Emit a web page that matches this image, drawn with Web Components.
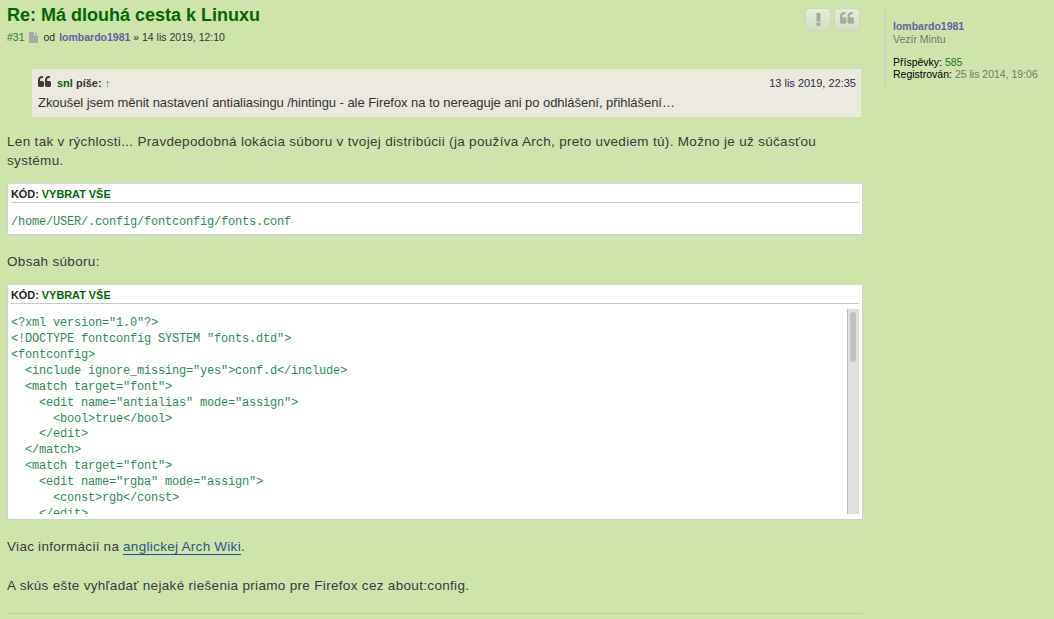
<!DOCTYPE html>
<html lang="sk"><head><meta charset="utf-8"><title>Re: Má dlouhá cesta k Linuxu</title>
<style>
html,body{margin:0;padding:0;height:619px;overflow:hidden;background:#cfe4ab}
body{font-family:"Liberation Sans",Arial,sans-serif;color:#333}
</style></head><body>
<forum-post>
  <post-head slot="head"></post-head>
  <quote-box slot="body" author="snl" date="13 lis 2019, 22:35">Zkoušel jsem měnit nastavení antialiasingu /hintingu - ale Firefox na to nereaguje ani po odhlášení, přihlášení…</quote-box>
  <post-text slot="body" class="t1">Len tak v rýchlosti... Pravdepodobná lokácia súboru v tvojej distribúcii (ja používa Arch, preto uvediem tú). Možno je už súčasťou systému.</post-text>
  <code-box slot="body" class="one"></code-box>
  <post-text slot="body" class="t2">Obsah súboru:</post-text>
  <code-box slot="body" class="two" scroll></code-box>
  <post-text slot="body" class="t3">Viac informácií na <a href="#">anglickej Arch Wiki</a>.</post-text>
  <post-text slot="body" class="t4">A skús ešte vyhľadať nejaké riešenia priamo pre Firefox cez about:config.</post-text>
  <post-profile slot="side"></post-profile>
</forum-post>
<script>
const QUOTE='M768 832v384q0 80-56 136t-136 56h-384q-80 0-136-56t-56-136v-704q0-104 40.500-198.500t109.500-163.500 163.500-109.500 198.500-40.500h64q26 0 45 19t19 45v128q0 26-19 45t-45 19h-64q-106 0-181 75t-75 181v32q0 40 28 68t68 28h224q80 0 136 56t56 136zm896 0v384q0 80-56 136t-136 56h-384q-80 0-136-56t-56-136v-704q0-104 40.500-198.500t109.500-163.500 163.500-109.500 198.500-40.500h64q26 0 45 19t19 45v128q0 26-19 45t-45 19h-64q-106 0-181 75t-75 181v32q0 40 28 68t68 28h224q80 0 136 56t56 136z';
function def(name,html,setup){customElements.define(name,class extends HTMLElement{constructor(){super();this.attachShadow({mode:'open'}).innerHTML=html;if(setup)setup(this)}})}
def('forum-post',`<style>
:host{display:grid;grid-template-columns:856px 1fr;column-gap:21px;padding:6px 0 0 7px;box-sizing:border-box;height:619px;overflow:hidden}
.main{display:flex;flex-direction:column;border-bottom:1px solid #b8cfa0;height:608px;box-sizing:border-box}
.body{display:flex;flex-direction:column}
</style>
<div class="main"><slot name="head"></slot><div class="body"><slot name="body"></slot></div></div>
<slot name="side"></slot>`);
def('post-head',`<style>
:host{display:block;position:relative;height:63px}
h3{margin:0;font:bold 18px/18px "Liberation Sans",sans-serif;color:#006600}
.meta{display:flex;align-items:center;font-size:10.500px;line-height:14px;margin-top:6px;color:#333}
.meta svg{margin:0 6px 0 4px}
.n{color:#1e7d2e}.u{font-weight:bold;color:#645f9e;margin-left:1px}
.btns{position:absolute;right:3px;top:2px;display:flex;gap:3px}
.b{width:24px;height:21px;border:1px solid #cfd6bd;border-radius:4px;background:linear-gradient(#e6ecd8,#d3e0bf);display:flex;align-items:center;justify-content:center}
</style>
<h3>Re: Má dlouhá cesta k Linuxu</h3>
<div class="meta"><span class="n">#31</span><svg width="9" height="11" viewBox="0 0 9 11"><path d="M0 0h5v3.500h4V11H0zM6 0l3 2.500H6z" fill="#a9ab9f"/></svg><span>od&nbsp;<span class="u">lombardo1981</span> » 14 lis 2019, 12:10</span></div>
<div class="btns"><div class="b"><svg width="5" height="13" viewBox="0 0 5 13"><path d="M.5 0h4v8.500h-4zM.5 9.500h4V13h-4z" fill="#a6ad96"/></svg></div><div class="b"><svg width="15" height="15" viewBox="0 0 1792 1792"><path d="${QUOTE}" fill="#a6ad96"/></svg></div></div>`);
def('quote-box',`<style>
:host{display:block;margin:0 2px 0 25px;background:#ebe9df;height:48px;box-sizing:border-box;padding:4px 5px 0 6px;font-size:13px;letter-spacing:-.05px;color:#333}
.top{display:flex;justify-content:space-between;align-items:center;height:19px;font-size:11px;letter-spacing:0}
.l{display:flex;align-items:center}
svg{margin-right:5px}
b a{color:#006600}
.arrow{color:#4f8a3c;font-weight:normal}
.date{color:#2d2d44}
.txt{line-height:17px;margin-top:2px;white-space:nowrap}
</style>
<div class="top"><div class="l"><svg width="14" height="14" viewBox="0 0 1792 1792"><path d="${QUOTE}" fill="#3f3a36"/></svg><b><a id="au"></a> píše:</b>&nbsp;<span class="arrow">↑</span></div><div class="date" id="dt"></div></div>
<div class="txt"><slot></slot></div>`,el=>{queueMicrotask(()=>{el.shadowRoot.getElementById('au').textContent=el.getAttribute('author');el.shadowRoot.getElementById('dt').textContent=el.getAttribute('date')})});
def('post-text',`<style>
:host{display:block;font-size:13.500px;line-height:19px;color:#3a3a3a;letter-spacing:.32px;margin-top:14px}
:host(.t1){margin-top:15px}
:host(.t2){margin-top:17px}
:host(.t3){margin-top:17px;word-spacing:-.3px}
:host(.t4){margin-top:20px}
::slotted(a){color:#1d5a8c;text-decoration:none;border-bottom:1px solid #11508c}
</style><slot></slot>`);
const ONE=['/home/USER/.config/fontconfig/fonts.conf'];
const TWO=['<?xml version="1.0"?>','<!DOCTYPE fontconfig SYSTEM "fonts.dtd">','<fontconfig>','  <include ignore_missing="yes">conf.d</include>','  <match target="font">','    <edit name="antialias" mode="assign">','      <bool>true</bool>','    </edit>','  </match>','  <match target="font">','    <edit name="rgba" mode="assign">','      <const>rgb</const>','    </edit>'];
def('code-box',`<style>
:host{display:block;background:#fff;border:1px solid #c9d2d8;border-top-color:#d4dbe0;padding:3px 3px 5px 3px;box-sizing:border-box;margin-top:13px}
:host(.one){height:52px}
:host(.two){height:236px;margin-top:13px}
.h{font-size:10.900px;font-weight:bold;line-height:15px;height:15px;border-bottom:1px solid #c8c8c8;color:#222;text-transform:uppercase}
.h a{color:#006600}
.row{display:flex;margin-top:5px;height:calc(100% - 21px)}
pre{flex:1;margin:0;overflow:hidden;font:12px/15.920px "Liberation Mono",monospace;letter-spacing:-.2px;color:#2e8b57;padding:7px 0 0 0}
.sb{border-left:1px solid #b9b9b9;background:#e0e0e0;display:none;flex-direction:column;align-items:center;padding:3px 1px 0 0;box-sizing:border-box;width:12px}
.sb i{display:block;width:6px;height:50px;border-radius:3px;background:#c0c2c0}
</style>
<div class="h">Kód: <a>Vybrat vše</a></div>
<div class="row"><pre id="p"></pre><div class="sb" id="s"><i></i></div></div>`,el=>{queueMicrotask(()=>{const two=el.hasAttribute('scroll');el.shadowRoot.getElementById('p').textContent=(two?TWO:ONE).join('\n');if(two)el.shadowRoot.getElementById('s').style.display='flex'})});
def('post-profile',`<style>
:host{display:block;height:80px;margin-top:1px;border-left:2px solid #c5d6bd;padding:13px 0 0 7px;box-sizing:border-box;font-size:10.500px;line-height:13px;color:#000}
.u{font-weight:bold;color:#645f9e}
.r{color:#6f7a62;margin-bottom:10px}
.s{line-height:12px}
.g{color:#0f7a17}.d{color:#6f7a62}
</style>
<div class="u">lombardo1981</div><div class="r">Vezír Mintu</div>
<div class="s">Příspěvky: <span class="g">585</span></div><div class="s">Registrován: <span class="d">25 lis 2014, 19:06</span></div>`);
</script>
</body></html>
